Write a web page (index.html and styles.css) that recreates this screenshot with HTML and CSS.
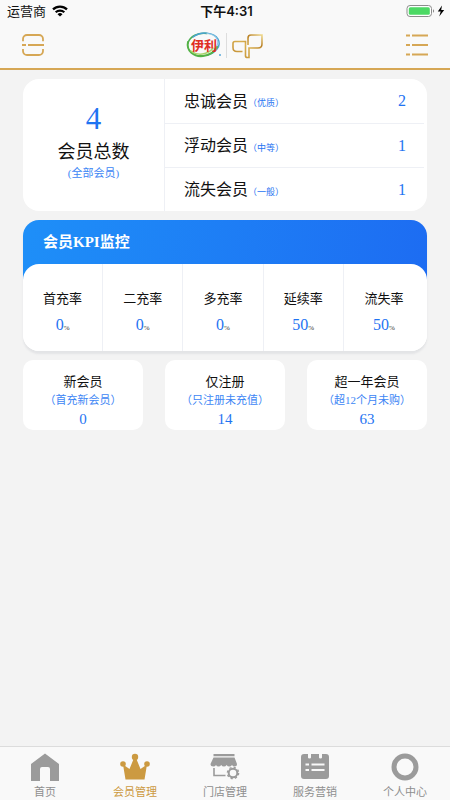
FILE: index.html
```html
<!DOCTYPE html>
<html lang="zh-CN">
<head>
<meta charset="utf-8">
<meta name="viewport" content="width=device-width, initial-scale=1">
<title>会员管理</title>
<link rel="stylesheet" href="styles.css">
</head>
<body>
<header class="top">
  <div class="status">
    <div class="status-left">
      <span>运营商</span>
      <svg width="16" height="12" viewBox="0 0 16 12" fill="none" stroke="#000" stroke-width="2.2" aria-hidden="true">
        <path d="M1 4.4a10 10 0 0 1 14 0"/><path d="M3.7 7.3a6.2 6.2 0 0 1 8.6 0"/><path d="M8 11.6 5.5 9.2a3.6 3.6 0 0 1 5 0z" fill="#000" stroke="none"/>
      </svg>
    </div>
    <span class="clock">下午4:31</span>
    <svg class="battery" width="40" height="14" viewBox="0 0 40 14" aria-hidden="true">
      <rect x="1" y="1.5" width="24.5" height="11" rx="3" fill="#fff" stroke="#8c8c8c"/>
      <rect x="2.8" y="3.2" width="21" height="7.6" rx="1.5" fill="#4cd964"/>
      <path d="M27 5.2v3.6c1.5-.6 1.5-3 0-3.6z" fill="#8c8c8c"/>
      <path d="M36 1.5 31.8 7.6h2.9L33.2 12.5l5-6.5h-3z" fill="#000"/>
    </svg>
  </div>
  <nav class="bar">
    <button class="icon-btn" type="button" aria-label="扫一扫">
      <svg width="22" height="22" viewBox="0 0 22 22" fill="none" stroke="#d6a755" stroke-width="1.8">
        <path d="M1 7.2V5a4 4 0 0 1 4-4h12a4 4 0 0 1 4 4v2.2M1 15v2a4 4 0 0 0 4 4h12a4 4 0 0 0 4-4v-2M0 11h4M6 11h16"/>
      </svg>
    </button>
    <svg class="brand" width="80" height="30" viewBox="0 0 80 30" role="img" aria-label="伊利">
      <defs>
        <linearGradient id="gold" x1="0" y1="1" x2="1" y2="0"><stop offset="0" stop-color="#c08a30"/><stop offset=".5" stop-color="#d9b050"/><stop offset=".75" stop-color="#b98127"/><stop offset="1" stop-color="#efd98c"/></linearGradient>
      </defs>
      <g fill="none" stroke-linecap="round">
        <path d="M3 13C5 6 13 2.500 22 3.500" stroke="#4bae50" stroke-width="1.5"/>
        <path d="M8 7C16 1 29 2 33 9c4 7-3 14-10 16" stroke="#4aa3d2" stroke-width="1.5"/>
        <path d="M22 3.500c11 1 14 10 7 16" stroke="#94cbe5" stroke-width="1.200"/>
        <path d="M3 12C1 21 9 27 18 26c6-.5 12-4 14-9" stroke="#54b246" stroke-width="2"/>
        <path d="M6 21c6 5 17 4 22-3" stroke="#a6d36b" stroke-width="1.500"/>
      </g>
      <text class="brand-text" x="6" y="20">伊利</text>
      <circle cx="35" cy="25" r="1" fill="#5aa9d8"/>
      <path d="M41.500 3v25" stroke="#ddd"/>
      <path d="M60.500 16v-4.500H50q-2 0-2 2v4q0 4 4 4h5.500M60.500 15v11q0 1.500 2 1.500H64V18h9q4 0 4-4V5H66q-3 0-3 3v7" fill="none" stroke="url(#gold)" stroke-width="1.600"/>
    </svg>
    <button class="icon-btn" type="button" aria-label="菜单">
      <svg width="22" height="24" viewBox="0 0 22 24" fill="none" stroke="#d6a755" stroke-width="2">
        <path d="M0 2.500h4M6 2.500h16M0 12h4M6 12h16M0 21.500h4M6 21.500h16"/>
      </svg>
    </button>
  </nav>
</header>

<main class="content">
  <section class="summary">
    <div class="total">
      <strong class="total-num">4</strong>
      <span class="total-name">会员总数</span>
      <span class="total-note">(全部会员)</span>
    </div>
    <ul class="levels">
      <li><span class="level-name">忠诚会员</span><small>（优质）</small><b>2</b></li>
      <li><span class="level-name">浮动会员</span><small>（中等）</small><b>1</b></li>
      <li><span class="level-name">流失会员</span><small>（一般）</small><b>1</b></li>
    </ul>
  </section>

  <section class="kpi">
    <h2>会员KPI监控</h2>
    <ul class="rates">
      <li><span>首充率</span><p><b>0</b>%</p></li>
      <li><span>二充率</span><p><b>0</b>%</p></li>
      <li><span>多充率</span><p><b>0</b>%</p></li>
      <li><span>延续率</span><p><b>50</b>%</p></li>
      <li><span>流失率</span><p><b>50</b>%</p></li>
    </ul>
  </section>

  <section class="groups">
    <div class="group"><h3>新会员</h3><span>（首充新会员）</span><b>0</b></div>
    <div class="group"><h3>仅注册</h3><span>（只注册未充值）</span><b>14</b></div>
    <div class="group"><h3>超一年会员</h3><span>（超12个月未购）</span><b>63</b></div>
  </section>
</main>

<nav class="tabs">
  <a href="#home">
    <svg width="30" height="30" viewBox="0 0 30 30" fill="#9b9b9b" aria-hidden="true"><path d="M15 1.500 1 12v17h9V17q0-2 2-2h6q2 0 2 2v12h9V12z"/></svg>
    <span>首页</span>
  </a>
  <a class="active" href="#members" aria-current="page">
    <svg width="30" height="30" viewBox="0 0 30 30" fill="#cc9a41" aria-hidden="true"><circle cx="15" cy="5" r="3.200"/><circle cx="3" cy="12" r="2.800"/><circle cx="27" cy="12" r="2.800"/><path d="M3 12.500 9.500 17 14 6h2l4.500 11 6.500-4.500L24.500 27.500h-19z"/></svg>
    <span>会员管理</span>
  </a>
  <a href="#stores">
    <svg width="30" height="30" viewBox="0 0 30 30" fill="#9b9b9b" aria-hidden="true">
      <path d="M3.500 2h21v2.300h-21zM3.500 5.500h21L27 12q0 2.500-2.500 2.500-1.500 0-2.500-1.500-1 1.500-2.700 1.500T16.600 13q-1 1.500-2.700 1.500T11.200 13q-1 1.500-2.700 1.500T6 13q-1 1.500-2.500 1.500Q.5 14.500.5 12z"/>
      <path d="M4 16v7.500h11.500" fill="none" stroke="#9b9b9b" stroke-width="1.600"/>
      <circle cx="23" cy="21" r="4.300" fill="none" stroke="#9b9b9b" stroke-width="2"/>
      <circle cx="23" cy="21" r="5.600" fill="none" stroke="#9b9b9b" stroke-width="1.400" stroke-dasharray="2.200 2.200"/>
    </svg>
    <span>门店管理</span>
  </a>
  <a href="#service">
    <svg width="30" height="30" viewBox="0 0 30 30" aria-hidden="true">
      <path d="M4 2h4v3.500q0 1 1.500 1t1.500-1V2h8v3.500q0 1 1.500 1t1.500-1V2h4q3 0 3 3v19q0 3-3 3H4q-3 0-3-3V5q0-3 3-3z" fill="#9b9b9b"/>
      <path d="M5.500 12.500H9M11.500 12.500h13M5.500 18H9M11.500 18h13" stroke="#f9f9f9" stroke-width="2.200"/>
    </svg>
    <span>服务营销</span>
  </a>
  <a href="#me">
    <svg width="30" height="30" viewBox="0 0 30 30" aria-hidden="true"><circle cx="15" cy="15" r="11" fill="none" stroke="#9b9b9b" stroke-width="5"/></svg>
    <span>个人中心</span>
  </a>
</nav>
</body>
</html>
```
FILE: styles.css
```css
* { box-sizing: border-box; }

body {
  margin: 0;
  min-height: 100vh;
  display: flex;
  flex-direction: column;
  background: #f3f3f3;
  color: #111;
  font-family: "Liberation Serif", "Noto Sans CJK SC", serif;
}

ul, h2, h3, p { margin: 0; padding: 0; }
ul { list-style: none; }
b, strong { font-weight: 400; color: #1f74f2; }

.top { background: #f9f9f9; border-bottom: 2px solid #d6a755; }

.status {
  display: grid;
  grid-template-columns: 1fr auto 1fr;
  align-items: center;
  height: 22px;
  padding: 0 4px 0 7px;
  font: 13px/22px "Inter", "Noto Sans CJK SC", sans-serif;
}
.status-left { display: flex; align-items: center; gap: 6px; }
.clock { font-weight: 600; }
.battery { justify-self: end; }

.bar {
  display: flex;
  align-items: center;
  justify-content: space-between;
  height: 46px;
  padding: 0 22px;
}
.icon-btn { display: flex; padding: 0; border: 0; background: none; }
.brand-text {
  font: oblique 8deg 700 13px "Noto Sans CJK SC", sans-serif;
  fill: #e02c22;
}

.content {
  flex: 1;
  display: flex;
  flex-direction: column;
  gap: 9px;
  padding: 9px 23px;
}

.summary {
  display: grid;
  grid-template-columns: 142px 1fr;
  background: #fff;
  border-radius: 16px;
}
.total {
  display: flex;
  flex-direction: column;
  align-items: center;
  justify-content: center;
  padding-bottom: 11px;
  border-right: 1px solid #eef0f5;
}
.total-num { font-size: 31px; line-height: 40px; }
.total-name { font-size: 18px; line-height: 26px; }
.total-note { font-size: 11px; line-height: 16px; color: #3d86f5; }

.levels { padding-right: 3px; }
.levels li {
  display: flex;
  align-items: center;
  height: 44px;
  padding: 0 18px 0 19px;
}
.levels li + li { border-top: 1px solid #eef0f5; }
.level-name { padding-bottom: 3px; font-size: 16px; }
.levels small { font-size: 9px; line-height: 12px; padding-top: 4px; color: #1f74f2; }
.levels b { margin-left: auto; font-size: 16px; }

.kpi {
  border-radius: 16px;
  background: #fff linear-gradient(100deg, #1e8ff8, #1d6cf2) no-repeat top / 100% 70px;
  box-shadow: 0 3px 2px #e3e4e6;
}
.kpi h2 {
  padding: 0 20px;
  color: #fff;
  font-size: 15px;
  line-height: 44px;
}
.rates {
  display: grid;
  grid-template-columns: repeat(5, 1fr);
  padding-right: 3px;
  background: #fff;
  border-radius: 16px;
}
.rates li { padding: 24px 0 12px; text-align: center; font-size: 13px; line-height: 22px; }
.rates li:not(:last-child) { border-right: 1px solid #eef0f5; }
.rates p { padding-top: 4px; font-size: 7px; line-height: 22px; color: #333; }
.rates b { font-size: 16px; }

.groups { display: grid; grid-template-columns: repeat(3, 1fr); gap: 22px; }
.group {
  display: flex;
  flex-direction: column;
  align-items: center;
  padding: 12px 0 1px;
  background: #fff;
  border-radius: 10px;
  white-space: nowrap;
}
.group h3 { font-size: 13px; font-weight: 400; line-height: 19px; }
.group span { font-size: 11px; line-height: 18px; color: #3d86f5; }
.group b { font-size: 15px; line-height: 20px; }

.tabs {
  display: grid;
  grid-template-columns: repeat(5, 1fr);
  background: #f9f9f9;
  border-top: 1px solid #dcdcdc;
}
.tabs a {
  display: flex;
  flex-direction: column;
  align-items: center;
  padding-top: 5px;
  color: #8e8e8e;
  font: 11px/18px "Noto Sans CJK SC", sans-serif;
  text-decoration: none;
}
.tabs .active { color: #cc9a41; }
```
